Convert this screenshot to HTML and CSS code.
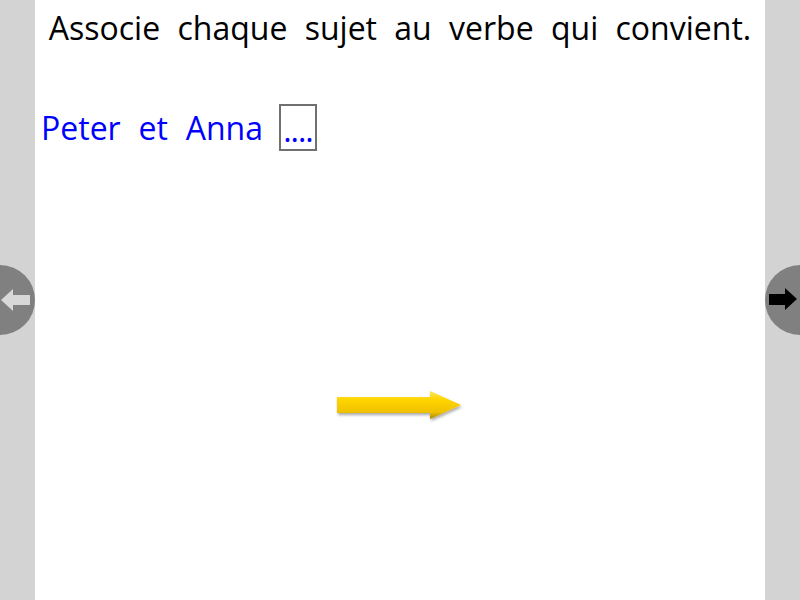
FILE: index.html
```html
<!DOCTYPE html>
<html lang="fr">
<head>
<meta charset="utf-8">
<link rel="stylesheet" href="styles.css">
</head>
<body>
<div class="page">
  <aside class="side side-left">
    <button class="nav nav-prev" aria-label="Précédent">
      <svg width="32" height="24" viewBox="0 0 32 24"><polygon points="0,12 12,1 12,7 29,7 29,17 12,17 12,23" fill="#d8d8d8"/></svg>
    </button>
  </aside>
  <main class="content">
    <h1 class="title">Associe chaque sujet au verbe qui convient.</h1>
    <div class="row">
      <span class="subject">Peter et Anna</span>
      <span class="blank">....</span>
    </div>
    <div class="arrow-area">
      <svg class="yellow-arrow" width="130" height="34" viewBox="0 0 130 34">
        <defs>
          <linearGradient id="yg" x1="0" y1="0" x2="0" y2="1">
            <stop offset="0" stop-color="#ffe45c"/>
            <stop offset="0.3" stop-color="#ffd500"/>
            <stop offset="0.75" stop-color="#f0c200"/>
            <stop offset="1" stop-color="#a88400"/>
          </linearGradient>
          <filter id="sh" x="-10%" y="-20%" width="130%" height="160%">
            <feDropShadow dx="1" dy="2" stdDeviation="1.5" flood-color="#000" flood-opacity="0.35"/>
          </filter>
        </defs>
        <polygon points="1,7 94,7 94,1 125,15 94,29 94,23 1,23" fill="url(#yg)" filter="url(#sh)"/>
      </svg>
    </div>
  </main>
  <aside class="side side-right">
    <button class="nav nav-next" aria-label="Suivant">
      <svg width="32" height="24" viewBox="0 0 32 24"><polygon points="3,6 19,6 19,0 31,11 19,22 19,17 3,17" fill="#000"/></svg>
    </button>
  </aside>
</div>
</body>
</html>
```
FILE: styles.css
```css
html, body {
  margin: 0;
  padding: 0;
  width: 800px;
  height: 600px;
  overflow: hidden;
  background: #d3d3d3;
}
.page {
  display: flex;
  width: 800px;
  height: 600px;
}
.side {
  width: 35px;
  flex: none;
  background: #d3d3d3;
  position: relative;
}
.content {
  flex: 1;
  background: #fff;
  font-family: "Open Sans", sans-serif;
}
.title {
  margin: 0;
  padding-top: 6px;
  font-size: 32px;
  font-weight: normal;
  text-align: center;
  word-spacing: 9px;
  color: #000;
  line-height: 44px;
}
.row {
  display: flex;
  align-items: center;
  margin-top: 54px;
  padding-left: 6px;
  color: #0000ff;
  font-size: 32px;
  line-height: 44px;
}
.subject {
  word-spacing: 9.5px;
}
.blank {
  margin-left: 16px;
  width: 38px;
  height: 47px;
  border: 2px solid #707070;
  box-sizing: border-box;
  display: flex;
  align-items: flex-end;
  justify-content: center;
  line-height: 38px;
  font-size: 32px;
  letter-spacing: -1px;
}
.nav {
  position: absolute;
  top: 265px;
  width: 70px;
  height: 70px;
  border-radius: 50%;
  background: #808080;
  border: none;
  padding: 0;
  display: flex;
  align-items: center;
}
.nav-prev {
  left: -35px;
  justify-content: flex-end;
  padding-right: 2px;
}
.nav-next {
  left: 0;
  justify-content: flex-start;
  padding-left: 1px;
}
.arrow-area {
  display: flex;
  justify-content: flex-start;
  padding-left: 301px;
  margin-top: 239px;
}
.yellow-arrow {
  display: block;
}
```
